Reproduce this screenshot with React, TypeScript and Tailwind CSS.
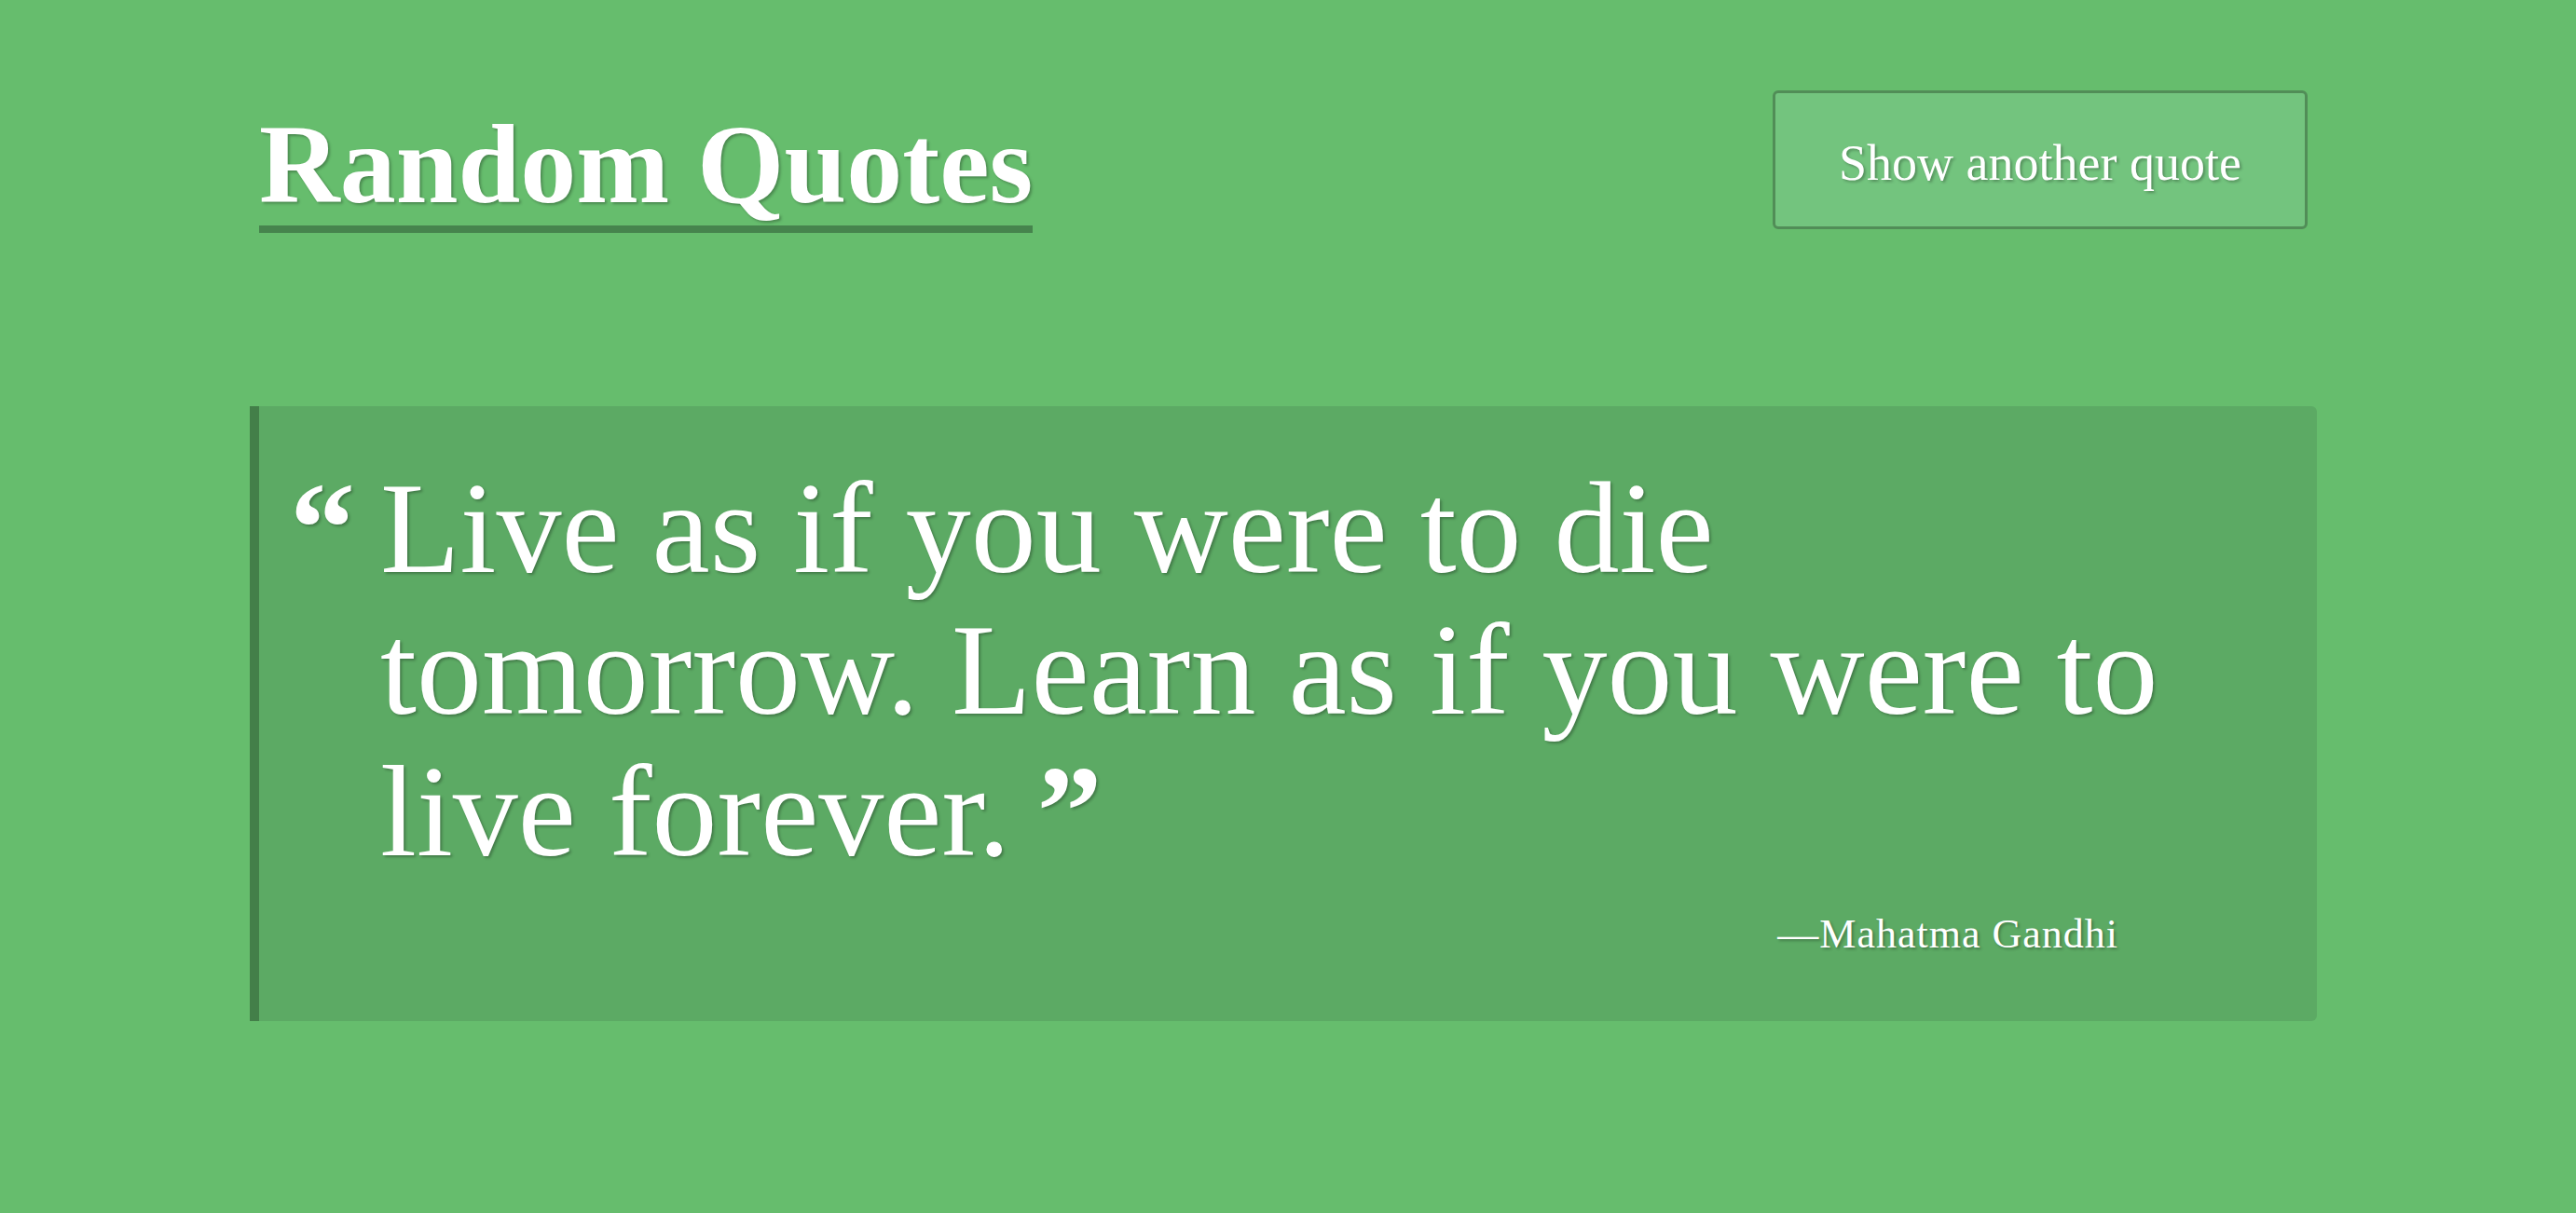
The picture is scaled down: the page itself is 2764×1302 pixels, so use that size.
import React from "react";

const quote = {
    text: "Live as if you were to die tomorrow. Learn as if you were to live forever.",
    author: "Mahatma Gandhi",
};

const serif = "font-['Liberation_Serif','Times_New_Roman',serif]";
const shadow = "[text-shadow:2px_2px_3px_rgba(0,0,0,0.28)]";

export default function App() {
    return (
        <div className={`min-h-[1302px] w-full bg-[#66bd6d] text-white ${serif}`}>
            <div className="ml-[268px] w-[2218px]">
                {/* Header */}
                <header className="flex items-start justify-between px-[10px] pt-[97px]">
                    <h1
                        className={`mt-[21px] inline-block border-b-[8px] border-[#46844d] pb-[6px] text-[120px] font-bold leading-[118px] ${shadow}`}
                    >
                        Random Quotes
                    </h1>
                    <button
                        className={`flex h-[149px] w-[574px] items-center justify-center rounded-[6px] border-[3px] border-[#518d57] bg-[#73c47e] pt-[6px] text-[54px] leading-[54px] ${shadow}`}
                    >
                        Show another quote
                    </button>
                </header>

                {/* Quote */}
                <section className="mt-[186px] rounded-r-md border-l-[10px] border-[#437f49] bg-[#5caa64] pt-[55px] pb-[60px]">
                    <div className={`flex pl-[33px] text-[140px] leading-[152px] ${shadow}`}>
                        <span className="w-[97px] shrink-0 font-bold">“</span>
                        <p className="w-[1980px]">
                            {quote.text}{"\u2009"}
                            <span className="inline-block font-bold leading-[152px]">”</span>
                        </p>
                    </div>
                    <div className="mt-[23px] flex justify-end pr-[213px]">
                        <p className={`text-[44px] leading-[66px] tracking-[1px] ${shadow}`}>
                            —{quote.author}
                        </p>
                    </div>
                </section>
            </div>
        </div>
    );
}
